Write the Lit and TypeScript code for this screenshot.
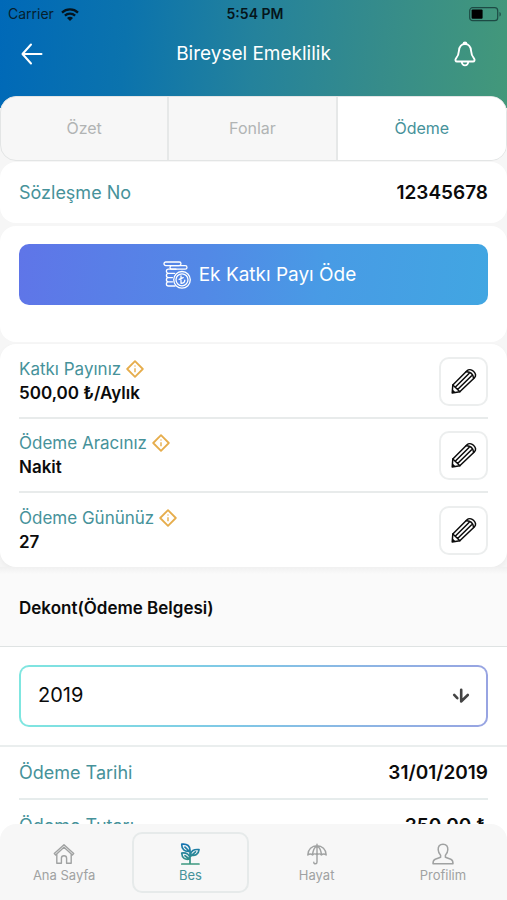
import { LitElement, html, css, svg } from "lit";
import { customElement, state } from "lit/decorators.js";
import { classMap } from "lit/directives/class-map.js";

const icons = {
  wifi: svg`<svg class="wifi" viewBox="0 0 18 13" aria-hidden="true"><g fill="none" stroke="currentColor" stroke-width="2.3"><path d="M1 4.6C5.5 .4 12.500 .4 17 4.600"/><path d="M3.900 7.700C6.800 5 11.200 5 14.100 7.700"/></g><path d="M6 9.900C7.700 8.400 10.300 8.400 12 9.900L9 12.900Z" fill="currentColor"/></svg>`,
  battery: svg`<svg class="battery" viewBox="0 0 33 15" aria-hidden="true"><rect x=".7" y=".7" width="28" height="13" rx="3" fill="none" stroke="#1d4a44" stroke-width="1.2"/><rect x="2.600" y="2.600" width="11" height="9.200" rx="1" fill="#000"/><path d="M30.500 5v4.600c1.800-.6 1.800-4 0-4.600Z" fill="#1d4a44"/></svg>`,
  back: svg`<svg class="back" viewBox="0 0 22 22" aria-hidden="true"><path d="M20.500 11H1.700M10 1.500L1.500 11l8.500 9.500" fill="none" stroke="currentColor" stroke-width="2" stroke-linecap="round" stroke-linejoin="round"/></svg>`,
  bell: svg`<svg class="bell" viewBox="0 0 22 26" aria-hidden="true"><path d="M11 3C7.500 3 5.200 6 5 9.500C4.800 13 4.200 15 1.900 17.600C1 19 1.500 20.500 3 20.500H19C20.500 20.500 21 19 20.100 17.600C17.800 15 17.200 13 17 9.500C16.800 6 14.500 3 11 3ZM9.600 2.800a1.400 1.400 0 0 1 2.800 0M7.800 20.800a3.200 3.600 0 0 0 6.400 0" fill="none" stroke="currentColor" stroke-width="1.900" stroke-linejoin="round"/></svg>`,
  coins: svg`<svg class="coins" viewBox="0 0 28 28" aria-hidden="true"><g fill="none" stroke="currentColor" stroke-width="1.300" stroke-linejoin="round" stroke-linecap="round"><rect x="1" y="1" width="17" height="3.600" rx="1.800"/><rect x="7" y="4.600" width="17" height="3.600" rx="1.800"/><path d="M13 8.200H5.500a2 2 0 0 0 0 4.200h6M5.500 12.400a2 2 0 0 0 0 4.200h4M5.500 16.600a2 2 0 0 0 0 4.200h4M5.500 20.800a2 2 0 0 0 0 4.200h6.500"/><circle cx="19" cy="18.800" r="8.300"/><circle cx="19" cy="18.800" r="6"/><path d="M18 15v7.300c2.300 0 3.700-1.200 3.800-3.200M16.200 18.400l4-1.800"/></g></svg>`,
  info: svg`<svg class="info" viewBox="0 0 18 18" aria-hidden="true"><path d="M9 1.200L16.800 9L9 16.800L1.200 9Z" fill="none" stroke="#e6ad4c" stroke-width="1.800" stroke-linejoin="round"/><path d="M9 8.200v4M9 5.600v1" stroke="#e6ad4c" stroke-width="1.400"/></svg>`,
  pencil: svg`<svg class="pencil" viewBox="0 0 26 26" aria-hidden="true"><g fill="none" stroke="currentColor" stroke-width="1.500" stroke-linejoin="round" stroke-linecap="round"><path d="M1.800 17L16 2.800C17.500 1.300 20.300 1.200 22.500 3.200C24.900 5.400 25.200 8 23.500 9.700L8.800 23.800L1.200 25Z"/><path d="M1.800 17L4.200 19.300L6.600 21.500L8.800 23.800M4.200 19.300L18 5.500M6.600 21.500L20.600 7.700M15.200 3.700c4-.3 7.300 2.600 7.400 6.800"/></g><path d="M1.200 25l.5-3.500l3 3Z" fill="currentColor"/></svg>`,
  down: svg`<svg class="down" viewBox="0 0 18 16" aria-hidden="true"><path d="M9.200 1.800V13.500M9.600 13L15.800 7M2.200 6.900L5.300 10.200" fill="none" stroke="#444" stroke-width="2.600" stroke-linecap="round"/></svg>`,
  home: svg`<svg class="nav-icon" viewBox="0 0 22 22" aria-hidden="true"><g fill="none" stroke="currentColor" stroke-width="1.400" stroke-linejoin="round" stroke-linecap="round"><path d="M1.300 10.600L11 1.800l9.700 8.800-1.300 1.300L11 4.300l-8.400 7.600ZM3.800 11.200v9.100h4.600v-5a2.600 2.600 0 0 1 5.200 0v5h4.600v-9.100"/></g></svg>`,
  plant: svg`<svg class="nav-icon" viewBox="0 0 22 22" aria-hidden="true"><defs><linearGradient id="leaf" gradientUnits="userSpaceOnUse" x1="0" y1="0" x2="0" y2="22"><stop offset="0" stop-color="#1272b4"/><stop offset="1" stop-color="#3f9a7d"/></linearGradient></defs><g fill="none" stroke="url(#leaf)" stroke-width="1.700" stroke-linejoin="round" stroke-linecap="round"><path d="M2.800 21H20M11 21V8M2.800 1.200c5.400-.7 8.600 1.800 8.200 7-5.400.8-8.600-2-8.200-7ZM6 4.200L11 9M11 16c-5 1.200-8-.8-8.300-6 5-.5 8.300 1.500 8.300 6ZM6 12.700l5 3.800M11.500 12c.2-4.300 3.400-6 8.500-5.400-.3 4.500-3.800 6.800-8.500 5.400ZM16.500 8.800L11 13.800"/></g></svg>`,
  umbrella: svg`<svg class="nav-icon" viewBox="0 0 22 22" aria-hidden="true"><g fill="none" stroke="currentColor" stroke-width="1.400" stroke-linejoin="round" stroke-linecap="round"><path d="M1.800 12C1.800 6.500 6 2.800 11 2.800S20.200 6.500 20.200 12C18.800 10.700 16.600 10.700 15.400 12C14 10.500 12.300 10.500 11 12C9.700 10.500 8 10.500 6.600 12C5.400 10.700 3.200 10.700 1.800 12ZM11 2.800V1.200M11 2.800C8 4.500 6.800 8 6.600 12M11 2.800C14 4.500 15.200 8 15.400 12M11 2.800V19q0 1.800-1.600 1.800T7.800 19.300"/></g></svg>`,
  person: svg`<svg class="nav-icon" viewBox="0 0 22 22" aria-hidden="true"><path d="M11 1.200C7.500 1.200 6 3.500 6.200 6.800C6.300 9.500 7.300 11 8.600 12.200V14.300L3.200 16.300C1.500 17 1 18.500 1 20.700H21C21 18.500 20.500 17 18.800 16.300L13.400 14.300V12.200C14.700 11 15.700 9.500 15.800 6.800C16 3.500 14.500 1.200 11 1.200Z" fill="none" stroke="currentColor" stroke-width="1.500" stroke-linejoin="round"/></svg>`,
};

@customElement("app-root")
export class AppRoot extends LitElement {
  @state() private tab = "Ödeme";
  @state() private page = "Bes";

  private tabs = ["Özet", "Fonlar", "Ödeme"];
  private details = [
    { label: "Katkı Payınız", value: "500,00 ₺/Aylık" },
    { label: "Ödeme Aracınız", value: "Nakit" },
    { label: "Ödeme Gününüz", value: "27" },
  ];
  private receipts = [
    { label: "Ödeme Tarihi", value: "31/01/2019" },
    { label: "Ödeme Tutarı", value: "350,00 ₺" },
  ];
  private pages = [
    { label: "Ana Sayfa", icon: icons.home },
    { label: "Bes", icon: icons.plant },
    { label: "Hayat", icon: icons.umbrella },
    { label: "Profilim", icon: icons.person },
  ];

  static styles = css`
    :host {
      display: flex;
      flex-direction: column;
      height: 100vh;
      overflow: hidden;
      background: #fff;
      color: #0b0b0b;
      font-family: Inter, Roboto, sans-serif;
      font-size: 18px;
      line-height: 24px;
    }
    * { box-sizing: border-box; }
    button, select { font: inherit; color: inherit; margin: 0; padding: 0; border: 0; background: none; cursor: pointer; }
    svg { display: block; flex: none; }
    h1, h2, p, dl, dt, dd { margin: 0; font-weight: 400; font-size: inherit; }

    .header { flex: none; padding-bottom: 28px; background: linear-gradient(95deg, #0069b8 0%, #0b73ad 25%, #24829c 50%, #368c8a 75%, #43987a 100%); }
    .status { display: grid; grid-template-columns: 1fr auto 1fr; align-items: center; height: 28px; padding: 0 5px 0 8px; font-size: 14px; line-height: 20px; color: #06202e; }
    .carrier { display: flex; align-items: center; gap: 7px; }
    .time { font-weight: 600; color: #05151a; }
    .wifi { width: 18px; height: 13px; color: #04141f; }
    .battery { width: 33px; height: 15px; justify-self: end; }
    .bar { display: grid; grid-template-columns: 48px 1fr 48px; align-items: center; height: 52px; padding: 0 8px; color: #fff; }
    .bar h1 { text-align: center; font-size: 19px; }
    .bar button { display: grid; place-items: center; height: 48px; }
    .bar button:last-child { padding-right: 20px; }
    .back { width: 22px; height: 22px; }
    .bell { width: 22px; height: 26px; }

    .content { flex: 1; min-height: 0; margin-top: -12px; overflow-y: auto; scrollbar-width: none; background: linear-gradient(transparent 12px, #f6f6f6 12px); }
    .tabs { display: grid; grid-template-columns: repeat(3, 1fr); height: 65px; border: 1px solid #e3e5e5; border-radius: 16px; overflow: hidden; background: #f7f7f7; }
    .tab { padding-bottom: 2px; font-size: 16px; color: #b1b4b4; border-right: 2px solid #e6e8e8; }
    .tab:last-child { border-right: 0; }
    .tab.on { background: #fff; color: #46929a; }

    .card { background: #fff; border-radius: 16px; padding: 0 19px; }
    .contract { display: flex; align-items: center; justify-content: space-between; height: 61px; margin-top: 1px; }
    .label { color: #46929a; }
    .value { font-weight: 600; }
    .contract .value, .receipt .value { font-size: 19px; }
    .action { height: 116px; margin-top: 3px; padding-top: 18px; }
    .pay { display: flex; align-items: center; justify-content: center; gap: 8px; width: 100%; height: 61px; padding-left: 12px; border-radius: 10px; color: #fff; font-size: 19px; background: linear-gradient(97deg, #5f75e8, #5289e6 40%, #489be5 65%, #41a6e2); }
    .coins { width: 28px; height: 28px; }
    .details { margin-top: 2px; padding-top: 1px; box-shadow: 0 3px 5px #ececec; }
    .detail { display: flex; align-items: center; justify-content: space-between; height: 74px; border-bottom: 2px solid #e8ebeb; font-size: 17px; }
    .detail:last-child { border-bottom: 0; }
    .detail .label { display: flex; align-items: center; gap: 5px; font-size: 17px; }
    .info { width: 18px; height: 18px; }
    .edit { display: grid; place-items: center; width: 49px; height: 49px; border: 2px solid #eceeee; border-radius: 10px; background: #fff; }
    .pencil { width: 26px; height: 26px; }

    .heading { position: relative; display: flex; align-items: center; height: 80px; padding: 3px 19px 0; border-bottom: 1px solid #dfe3e3; background: linear-gradient(#f0f0f0, #fafafa 7px); font-size: 17px; font-weight: 600; }
    .year { position: relative; padding: 18px 19px; border-bottom: 2px solid #eaeeee; background: #fff; }
    .year select { display: block; width: 100%; height: 62px; padding: 0 17px 2px; border: 2px solid transparent; border-radius: 10px; appearance: none; font-size: 20px; background: linear-gradient(#fff, #fff) padding-box, linear-gradient(90deg, #7fe6e0, #7fc8e6 45%, #98a4e2) border-box; }
    .down { position: absolute; right: 37px; top: 41px; width: 18px; height: 16px; pointer-events: none; }
    .receipts { padding: 0 19px; background: #fff; }
    .receipt { display: flex; align-items: center; justify-content: space-between; height: 53px; border-bottom: 2px solid #e6ecec; }

    .footer { flex: none; background: #fff; }
    .nav { display: grid; grid-template-columns: repeat(4, 1fr); height: 76px; padding: 8px 1px 7px; border-radius: 16px 16px 0 0; background: #f7f7f7; }
    .nav button { display: flex; flex-direction: column; align-items: center; justify-content: center; margin: 0 5px; padding-top: 3px; border: 2px solid transparent; border-radius: 10px; font-size: 13px; line-height: 20px; color: #a0a2a2; }
    .nav button.on { color: #46929a; border-color: #e6eaea; }
    .nav-icon { width: 22px; height: 22px; }
  `;

  render() {
    return html`
      <header class="header">
        <div class="status">
          <span class="carrier">Carrier ${icons.wifi}</span>
          <span class="time">5:54 PM</span>
          ${icons.battery}
        </div>
        <div class="bar">
          <button aria-label="Geri">${icons.back}</button>
          <h1>Bireysel Emeklilik</h1>
          <button aria-label="Bildirimler">${icons.bell}</button>
        </div>
      </header>
      <main class="content">
        <div class="tabs" role="tablist">
          ${this.tabs.map((t) => html`<button role="tab" aria-selected=${t === this.tab} class=${classMap({ tab: true, on: t === this.tab })} @click=${() => (this.tab = t)}>${t}</button>`)}
        </div>
        <section class="card contract">
          <span class="label">Sözleşme No</span>
          <span class="value">12345678</span>
        </section>
        <section class="card action">
          <button class="pay">${icons.coins}<span>Ek Katkı Payı Öde</span></button>
        </section>
        <section class="card details">
          ${this.details.map((d) => html`
            <div class="detail">
              <div>
                <p class="label">${d.label} ${icons.info}</p>
                <p class="value">${d.value}</p>
              </div>
              <button class="edit" aria-label="${d.label} düzenle">${icons.pencil}</button>
            </div>`)}
        </section>
        <h2 class="heading"><label for="year">Dekont(Ödeme Belgesi)</label></h2>
        <div class="year">
          <select id="year"><option>2019</option></select>
          ${icons.down}
        </div>
        <dl class="receipts">
          ${this.receipts.map((r) => html`<div class="receipt"><dt class="label">${r.label}</dt><dd class="value">${r.value}</dd></div>`)}
        </dl>
      </main>
      <footer class="footer">
        <nav class="nav">
          ${this.pages.map((p) => html`<button class=${classMap({ on: p.label === this.page })} @click=${() => (this.page = p.label)}>${p.icon}<span>${p.label}</span></button>`)}
        </nav>
      </footer>
    `;
  }
}
